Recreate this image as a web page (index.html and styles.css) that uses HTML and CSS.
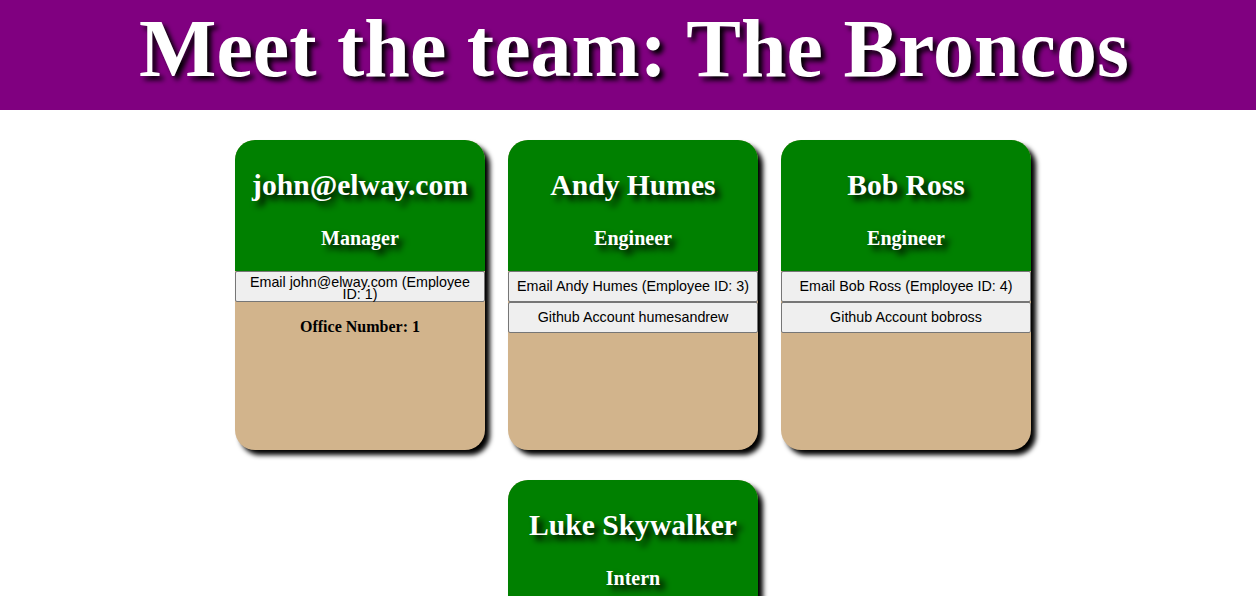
FILE: index.html
```html
<!DOCTYPE html>
<html>
<head>
<meta charset="utf-8">
<title>Team</title>
<link rel="stylesheet" href="styles.css">
</head>
<body>
<header class="banner">
  <h1 class="banner-title">Meet the team: The Broncos</h1>
</header>
<main class="team">
  <section class="card">
    <div class="card-head">
      <h2 class="card-name">john@elway.com</h2>
      <h3 class="card-role">Manager</h3>
    </div>
    <div class="card-body">
      <button class="card-btn wrap">Email john@elway.com (Employee ID: 1)</button>
      <h4 class="card-extra">Office Number: 1</h4>
    </div>
  </section>
  <section class="card">
    <div class="card-head">
      <h2 class="card-name">Andy Humes</h2>
      <h3 class="card-role">Engineer</h3>
    </div>
    <div class="card-body">
      <button class="card-btn">Email Andy Humes (Employee ID: 3)</button>
      <button class="card-btn">Github Account humesandrew</button>
    </div>
  </section>
  <section class="card">
    <div class="card-head">
      <h2 class="card-name">Bob Ross</h2>
      <h3 class="card-role">Engineer</h3>
    </div>
    <div class="card-body">
      <button class="card-btn">Email Bob Ross (Employee ID: 4)</button>
      <button class="card-btn">Github Account bobross</button>
    </div>
  </section>
  <section class="card">
    <div class="card-head">
      <h2 class="card-name">Luke Skywalker</h2>
      <h3 class="card-role">Intern</h3>
    </div>
    <div class="card-body">
      <button class="card-btn">Email Luke Skywalker (Employee ID: 5)</button>
      <h4 class="card-extra">School: Jedi Academy</h4>
    </div>
  </section>
</main>
</body>
</html>
```
FILE: styles.css
```css
html, body {
  margin: 0;
  padding: 0;
  background: #ffffff;
  font-family: "Liberation Serif", "Times New Roman", serif;
}

.banner {
  background: #800080;
  height: 110px;
  box-sizing: border-box;
  padding: 2px 0 0 12px;
  text-align: center;
}

.banner-title {
  margin: 0;
  font-size: 82px;
  line-height: 94px;
  font-weight: bold;
  color: #ffffff;
  text-shadow: 4px 4px 5px #000000;
}

.team {
  display: flex;
  flex-wrap: wrap;
  justify-content: center;
  gap: 30px 23px;
  width: 820px;
  margin: 0 auto;
  padding: 30px 0 40px 10px;
}

.card {
  width: 250px;
  height: 310px;
  border-radius: 20px;
  overflow: hidden;
  background: #d2b48c;
  box-shadow: 5px 5px 5px #000000;
  display: flex;
  flex-direction: column;
}

.card-head {
  background: #008000;
  height: 131px;
  box-sizing: border-box;
  padding-top: 28px;
  text-align: center;
  color: #ffffff;
}

.card-name {
  margin: 0;
  font-size: 29.6px;
  line-height: 34px;
  font-weight: bold;
  text-shadow: 5px 5px 6px #000000;
}

.card-role {
  margin: 24px 0 0;
  font-size: 20px;
  line-height: 24px;
  font-weight: bold;
  text-shadow: 5px 5px 6px #000000;
}

.card-body {
  display: flex;
  flex-direction: column;
}

.card-btn {
  display: block;
  width: 100%;
  height: 31px;
  margin: 0;
  padding: 0 6px;
  box-sizing: border-box;
  background: #efefef;
  border: 1px solid #767676;
  border-radius: 2px;
  font-family: "Liberation Sans", Arial, sans-serif;
  font-size: 14.3px;
  line-height: 15px;
  color: #000000;
  text-align: center;
  overflow: visible;
}

.card-btn.wrap {
  line-height: 12px;
  padding-top: 3px;
}

.card-extra {
  margin: 15px 0 0;
  font-size: 16px;
  line-height: 20px;
  font-weight: bold;
  text-align: center;
  color: #000000;
}
```
